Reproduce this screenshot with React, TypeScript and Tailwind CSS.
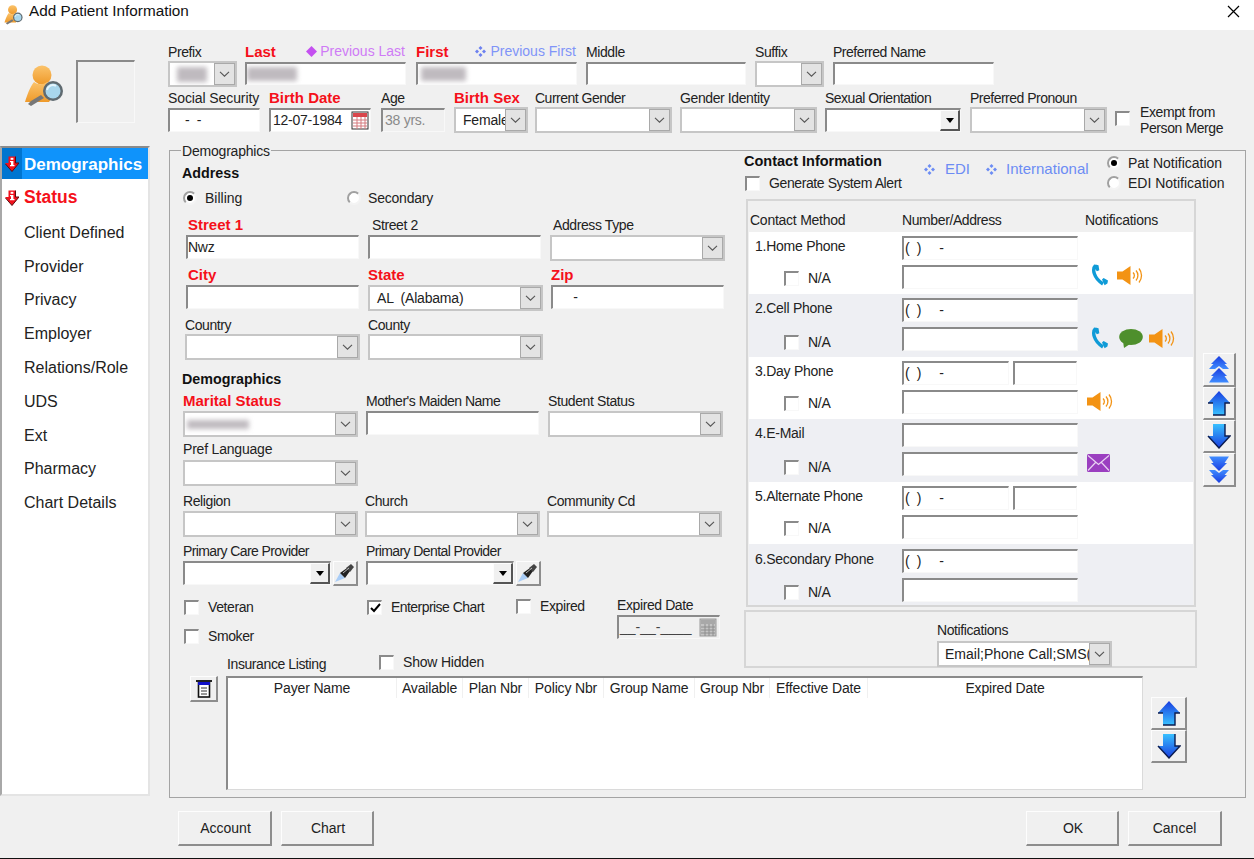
import type { ReactNode } from "react";

const sunken =
  "bg-white border-t-2 border-l-2 border-t-[#8a8a8a] border-l-[#8a8a8a] border-r border-b border-r-[#f8f8f8] border-b-[#f8f8f8]";
const raised =
  "bg-[#f0f0f0] border-t border-l border-t-[#fdfdfd] border-l-[#fdfdfd] border-r-2 border-b-2 border-r-[#8d8d8d] border-b-[#8d8d8d]";

function Label({ children, req, className = "" }: { children: ReactNode; req?: boolean; className?: string }) {
  return (
    <div
      className={`h-[17px] whitespace-nowrap ${
        req ? "leading-[15px] text-[15px] font-bold text-[#f5101a]" : "leading-[17px] text-[14px] tracking-[-0.4px] text-[#222]"
      } ${className}`}
    >
      {children}
    </div>
  );
}

function Input({ children, className = "" }: { children?: ReactNode; className?: string }) {
  return (
    <div className={`h-[24px] flex items-center overflow-hidden pl-[2px] text-[14px] tracking-[-0.25px] text-[#222] whitespace-pre ${sunken} ${className}`}>
      {children}
    </div>
  );
}

function Combo({ children, className = "" }: { children?: ReactNode; className?: string }) {
  return (
    <div className={`h-[26px] flex bg-white border-2 border-[#c6c6c6] text-[14px] tracking-[-0.2px] text-[#222] ${className}`}>
      <div className="flex-1 min-w-0 overflow-hidden whitespace-pre flex items-center pl-[7px]">{children}</div>
      <div className="w-[21px] shrink-0 bg-[#e3e3e3] border border-[#a9a9a9] flex items-center justify-center">
        <svg width="11" height="6" viewBox="0 0 11 6" fill="none" stroke="#555" strokeWidth="1.1">
          <path d="M1 0.8l4.5 4.4L10 0.8" />
        </svg>
      </div>
    </div>
  );
}

function DarkCombo({ className = "" }: { className?: string }) {
  return (
    <div className={`h-[24px] flex ${sunken} ${className}`}>
      <div className="flex-1" />
      <div className={`w-[20px] shrink-0 flex items-center justify-center ${raised} !border-r-[#555] !border-b-[#555]`}>
        <svg width="8" height="5" viewBox="0 0 8 5">
          <path d="M0 0h8L4 5z" fill="#000" />
        </svg>
      </div>
    </div>
  );
}

function Check({ checked, className = "" }: { checked?: boolean; className?: string }) {
  return (
    <div className={`w-[15px] h-[15px] shrink-0 ${sunken} flex items-center justify-center ${className}`}>
      {checked && (
        <svg width="11" height="10" viewBox="0 0 11 10" fill="none" stroke="#000" strokeWidth="2">
          <path d="M1 5l3 3 6-7" />
        </svg>
      )}
    </div>
  );
}

function Radio({ checked, className = "" }: { checked?: boolean; className?: string }) {
  return (
    <div
      className={`w-[14px] h-[14px] shrink-0 rounded-full bg-white border-2 border-t-[#a0a0a0] border-l-[#a0a0a0] border-r-[#f4f4f4] border-b-[#f4f4f4] flex items-center justify-center ${className}`}
    >
      {checked && <div className="w-[6px] h-[6px] rounded-full bg-black" />}
    </div>
  );
}

function Blur({ className }: { className: string }) {
  return <div className={`bg-[#bfbabf] blur-[2.5px] ${className}`} />;
}

function CheckLabel({ label, checked, className = "" }: { label: string; checked?: boolean; className?: string }) {
  return (
    <div className={`flex items-center h-[18px] text-[14px] tracking-[-0.4px] text-[#222] whitespace-nowrap ${className}`}>
      <Check checked={checked} />
      <span className="ml-[9px]">{label}</span>
    </div>
  );
}

function Sparkle({ color }: { color: string }) {
  return (
    <svg width="11" height="11" viewBox="0 0 11 11" fill={color} className="shrink-0">
      <path d="M5.5 0l2 2-2 2-2-2zM5.5 7l2 2-2 2-2-2zM2 3.5l2 2-2 2-2-2zM9 3.5l2 2-2 2-2-2z" />
    </svg>
  );
}

function PatientIcon({ size }: { size: number }) {
  return (
    <svg width={size} height={size} viewBox="0 0 42 42">
      <defs>
        <linearGradient id={`body${size}`} x1="0" y1="0" x2="0" y2="1">
          <stop offset="0" stopColor="#fbc36b" />
          <stop offset="1" stopColor="#ef9a2a" />
        </linearGradient>
      </defs>
      <circle cx="18" cy="10" r="9.5" fill={`url(#body${size})`} />
      <path d="M10 17c-4 5-7 13-9 20h24l6-9c-2-5-5-9-8-11-4 3-9 3-13 0z" fill={`url(#body${size})`} />
      <path d="M7 36l-3 3 3 2 13-8-3-3z" fill="#777" />
      <circle cx="29" cy="26" r="10" fill="#5f6a70" />
      <circle cx="29" cy="26" r="7.5" fill="#a8d6ec" />
      <path d="M23 25a6 6 0 0 1 9-4" stroke="#e4f4fb" strokeWidth="2" fill="none" />
    </svg>
  );
}

function AlertArrow() {
  return (
    <svg width="14" height="16" viewBox="0 0 14 16" className="shrink-0">
      <path d="M3.5 0.5h7v6.5H14L7 15.5 0 7h3.5z" fill="#f0101c" />
      <path d="M10.5 0.5V7H14L7 15.5" fill="none" stroke="#5a0a0c" strokeWidth="1" />
      <path d="M0.5 8L7 15.5" stroke="#5a0a0c" strokeWidth="1" />
      <rect x="5.6" y="1.8" width="2.8" height="2" fill="#fff" />
      <path d="M5 5h3.4v4H9.5v1.3H5V9h1V6.3H5z" fill="#fff" />
    </svg>
  );
}

function Phone() {
  return (
    <svg width="17" height="22" viewBox="0 0 17 22">
      <path d="M3.5 1.5C0 5 1.5 14 11 20" fill="none" stroke="#0f9bd7" strokeWidth="3.4" />
      <path d="M1.5 3l2-2.4 3 .6.8 5-2.4 1zM10 15.5l1.6-1.4 4.4 2.5-.6 3-2.8 1.6z" fill="#0f9bd7" />
    </svg>
  );
}

function Speaker({ className = "" }: { className?: string }) {
  return (
    <svg width="26" height="19" viewBox="0 0 26 19" className={className}>
      <path d="M0 5.5h5.5L13.5 0v19l-8-5.5H0z" fill="#f39314" />
      <g fill="none" stroke="#f39314" strokeWidth="1.3">
        <path d="M16 6.5a4 4 0 0 1 0 6" />
        <path d="M19 4.5a7.5 7.5 0 0 1 0 10" />
        <path d="M22 2.5a11 11 0 0 1 0 14" />
      </g>
    </svg>
  );
}

function Chat() {
  return (
    <svg width="24" height="19" viewBox="0 0 24 19">
      <ellipse cx="12" cy="8" rx="11.8" ry="8" fill="#4e8f2c" />
      <path d="M4 12l1 7 6-4z" fill="#4e8f2c" />
    </svg>
  );
}

function Mail() {
  return (
    <svg width="23" height="18" viewBox="0 0 23 18" className="mb-[2px]">
      <rect width="23" height="18" rx="1.5" fill="#9b3fc0" />
      <path d="M1 1.5l10.5 9 10.5-9M1 16.5l7.5-8M22 16.5l-7.5-8" fill="none" stroke="#e9d3f2" strokeWidth="1.2" />
    </svg>
  );
}

function Arrow({ id, down }: { id: string; down?: boolean }) {
  return (
    <svg width="24" height="26" viewBox="0 0 24 26">
      <defs>
        <linearGradient id={id} x1="0" y1="0" x2="0" y2="1">
          <stop offset="0" stopColor={down ? "#38c0ff" : "#1a3de0"} />
          <stop offset="1" stopColor={down ? "#1a3de0" : "#38c0ff"} />
        </linearGradient>
      </defs>
      {down ? (
        <>
          <path d="M6 1h12v12h5L12 25 1 13h5z" fill={`url(#${id})`} />
          <path d="M18 1v12h5L12 25 1 13" fill="none" stroke="#0b1c50" strokeWidth="1.4" />
        </>
      ) : (
        <>
          <path d="M12 1L23 13h-5v12H6V13H1z" fill={`url(#${id})`} />
          <path d="M23 13h-5v12H6M1 13h5" fill="none" stroke="#0b1c50" strokeWidth="1.4" />
        </>
      )}
    </svg>
  );
}

function DoubleArrow({ id, down }: { id: string; down?: boolean }) {
  return (
    <svg width="20" height="27" viewBox="0 0 20 27" className={down ? "rotate-180" : ""}>
      <defs>
        <linearGradient id={id} x1="0" y1="0" x2="0" y2="1">
          <stop offset="0" stopColor="#1a3de0" />
          <stop offset="1" stopColor="#3f8cff" />
        </linearGradient>
      </defs>
      <path d="M10 0l8 8-2.500 0L20 13H14L10 10 6 13H0L4.500 8H2z" fill={`url(#${id})`} />
      <path d="M10 12l8 8-2.500 0L20 26.500H0L4.500 20H2z" fill={`url(#${id})`} />
    </svg>
  );
}

function Calendar({ muted }: { muted?: boolean }) {
  return (
    <svg width="18" height="19" viewBox="0 0 18 19" className="shrink-0">
      <rect x="1" y="1" width="16" height="17" fill={muted ? "#c4c4c4" : "#fff"} stroke={muted ? "#9a9a9a" : "#333"} />
      <rect x="2" y="2" width="14" height="4" fill={muted ? "#a8a8a8" : "#d9464c"} />
      <path
        d="M2 9h14M2 12h14M2 15h14M6 6v12M10 6v12M14 6v12"
        stroke={muted ? "#8e8e8e" : "#d47a7e"}
        strokeWidth="1"
      />
    </svg>
  );
}

function Flashlight() {
  return (
    <button className={`w-[25px] h-[25px] shrink-0 flex items-center justify-center ${raised}`}>
      <svg width="20" height="20" viewBox="0 0 20 20">
        <path d="M0 19l5-9 5 5z" fill="#a9cdf7" />
        <path d="M5 10l7-5 3 3-5 7z" fill="#222" />
        <path d="M11 5l5-4 3 3-4 5z" fill="#444" />
        <path d="M8 10l6-5" stroke="#bbb" strokeWidth="1" />
      </svg>
    </button>
  );
}

const columns = [
  ["Payer Name", "w-[169px]"],
  ["Available", "w-[66px]"],
  ["Plan Nbr", "w-[66px]"],
  ["Policy Nbr", "w-[75px]"],
  ["Group Name", "w-[91px]"],
  ["Group Nbr", "w-[75px]"],
  ["Effective Date", "w-[98px]"],
  ["Expired Date", "flex-1"],
];

const contacts = [
  { label: "1.Home Phone", phone: true, icons: "home", bg: "bg-white", h: "h-[62px] pt-[4px]", na: "mt-[11px]" },
  { label: "2.Cell Phone", phone: true, icons: "cell", bg: "bg-[#eeeff3]", h: "h-[63px] pt-[4px]", na: "mt-[13px]" },
  { label: "3.Day Phone", phone: true, ext: true, icons: "day", bg: "bg-white", h: "h-[62px] pt-[4px]", na: "mt-[11px]" },
  { label: "4.E-Mail", icons: "mail", bg: "bg-[#eeeff3]", h: "h-[63px] pt-[4px]", na: "mt-[13px]" },
  { label: "5.Alternate Phone", phone: true, ext: true, bg: "bg-white", h: "h-[62px] pt-[4px]", na: "mt-[11px]" },
  { label: "6.Secondary Phone", phone: true, bg: "bg-[#eeeff3]", h: "h-[61px] pt-[5px]", na: "mt-[12px]" },
];

const navItems = ["Client Defined", "Provider", "Privacy", "Employer", "Relations/Role", "UDS", "Ext", "Pharmacy", "Chart Details"];

function ContactRow({ row }: { row: (typeof contacts)[number] }) {
  return (
    <div className={`${row.h} ${row.bg} flex`}>
      <div className="w-[153px]">
        <div className="pl-[6px] h-[21px] leading-[21px] text-[14px] tracking-[-0.25px] text-[#222] whitespace-nowrap">{row.label}</div>
        <div className={`flex items-center pl-[35px] text-[14px] tracking-[-0.25px] text-[#222] ${row.na}`}>
          <Check />
          <span className="ml-[9px]">N/A</span>
        </div>
      </div>
      <div className="w-[176px]">
        {row.ext ? (
          <div className="flex">
            <Input className="w-[107px] !pl-[1px]">{"(  )     -"}</Input>
            <Input className="w-[64px] ml-[4px]" />
          </div>
        ) : (
          <Input className="!pl-[1px]">{row.phone ? "(  )     -" : ""}</Input>
        )}
        <Input className="mt-[5px]" />
      </div>
      <div className="flex-1 flex items-end pb-[8px]">
        {row.icons === "home" && (
          <div className="ml-[14px] flex gap-[8px] items-center">
            <Phone />
            <Speaker />
          </div>
        )}
        {row.icons === "cell" && (
          <div className="ml-[14px] flex gap-[10px] items-center">
            <Phone />
            <Chat />
            <Speaker className="-ml-[4px]" />
          </div>
        )}
        {row.icons === "day" && <Speaker className="ml-[9px]" />}
        {row.icons === "mail" && <div className="ml-[9px]"><Mail /></div>}
      </div>
    </div>
  );
}

function Demographics() {
  return (
    <div className="w-[574px] shrink-0">
      <div className="ml-[12px] mt-[13px] h-[18px] leading-[18px] text-[14.3px] font-bold text-[#111]">Address</div>
      <div className="mt-[7px] flex items-center h-[18px] text-[14px] text-[#222]">
        <div className="ml-[13px] w-[164px] flex items-center">
          <Radio checked />
          <span className="ml-[8px]">Billing</span>
        </div>
        <Radio />
        <span className="ml-[7px] tracking-[-0.2px]">Secondary</span>
      </div>

      <div className="mt-[10px] flex h-[50px]">
        <div className="ml-[16px] w-[173px]">
          <Label req className="pl-[2px]">Street 1</Label>
          <Input className="mt-[1px] !pl-0">Nwz</Input>
        </div>
        <div className="ml-[9px] w-[173px]">
          <Label className="pl-[4px]">Street 2</Label>
          <Input className="mt-[1px]" />
        </div>
        <div className="ml-[9px] w-[175px]">
          <Label className="pl-[3px]">Address Type</Label>
          <Combo className="mt-[1px]" />
        </div>
      </div>
      <div className="flex h-[50px]">
        <div className="ml-[16px] w-[173px]">
          <Label req className="pl-[2px]">City</Label>
          <Input className="mt-[1px]" />
        </div>
        <div className="ml-[9px] w-[175px]">
          <Label req>State</Label>
          <Combo className="mt-[1px]">AL  (Alabama)</Combo>
        </div>
        <div className="ml-[8px] w-[173px]">
          <Label req>Zip</Label>
          <Input className="mt-[1px]">{"     -"}</Input>
        </div>
      </div>
      <div className="flex h-[50px]">
        <div className="ml-[15px] w-[175px]">
          <Label>Country</Label>
          <Combo />
        </div>
        <div className="ml-[8px] w-[175px]">
          <Label>County</Label>
          <Combo />
        </div>
      </div>

      <div className="ml-[12px] mt-[3px] h-[18px] leading-[18px] text-[14.3px] font-bold text-[#111]">Demographics</div>
      <div className="mt-[5px] flex">
        <div className="ml-[13px] w-[175px]">
          <Label req>Marital Status</Label>
          <Combo className="mt-[1px]">
            <Blur className="w-[62px] h-[9px] -ml-[5px]" />
          </Combo>
        </div>
        <div className="ml-[8px] w-[173px]">
          <Label className="!tracking-[-0.5px]">Mother's Maiden Name</Label>
          <Input className="mt-[1px]" />
        </div>
        <div className="ml-[9px] w-[175px]">
          <Label>Student Status</Label>
          <Combo className="mt-[1px]" />
        </div>
      </div>
      <div className="mt-[4px] ml-[13px] w-[175px]">
        <Label className="!tracking-[-0.2px]">Pref Language</Label>
        <Combo className="mt-[2px]" />
      </div>
      <div className="mt-[7px] flex">
        <div className="ml-[13px] w-[175px]">
          <Label>Religion</Label>
          <Combo className="mt-[1px]" />
        </div>
        <div className="ml-[7px] w-[175px]">
          <Label>Church</Label>
          <Combo className="mt-[1px]" />
        </div>
        <div className="ml-[7px] w-[175px]">
          <Label>Community Cd</Label>
          <Combo className="mt-[1px]" />
        </div>
      </div>
      <div className="mt-[6px] flex">
        <div className="ml-[13px]">
          <Label className="!tracking-[-0.6px]">Primary Care Provider</Label>
          <div className="flex mt-[1px]">
            <DarkCombo className="w-[148px]" />
            <div className="ml-[2px]">
              <Flashlight />
            </div>
          </div>
        </div>
        <div className="ml-[8px]">
          <Label className="!tracking-[-0.6px]">Primary Dental Provider</Label>
          <div className="flex mt-[1px]">
            <DarkCombo className="w-[148px]" />
            <div className="ml-[2px]">
              <Flashlight />
            </div>
          </div>
        </div>
      </div>
      <div className="mt-[12px] flex h-[38px]">
        <div className="ml-[14px] w-[183px]">
          <CheckLabel label="Veteran" />
          <CheckLabel label="Smoker" className="mt-[11px]" />
        </div>
        <CheckLabel label="Enterprise Chart" checked className="w-[149px] !tracking-[-0.55px]" />
        <CheckLabel label="Expired" className="-mt-[1px] w-[101px]" />
        <div className="-mt-[1px]">
          <Label>Expired Date</Label>
          <div className={`mt-[1px] w-[103px] h-[24px] flex items-center justify-between pl-[1px] pr-[2px] text-[14px] text-[#444] ${sunken} !bg-[#f0f0f0]`}>
            <span>__-__-____</span>
            <Calendar muted />
          </div>
        </div>
      </div>
      <div className="mt-[19px] flex h-[18px] text-[14px] tracking-[-0.4px] text-[#222]">
        <span className="ml-[57px] w-[100px] leading-[18px] whitespace-nowrap">Insurance Listing</span>
        <CheckLabel label="Show Hidden" className="ml-[52px] -mt-[2px] !tracking-[-0.2px]" />
      </div>
    </div>
  );
}

function Contact() {
  return (
    <div className="flex-1 min-w-0">
      <div className="flex h-[48px]">
        <div className="w-[180px] pt-[1px]">
          <div className="h-[18px] leading-[18px] text-[14.5px] font-bold text-[#111] whitespace-nowrap">Contact Information</div>
          <CheckLabel label="Generate System Alert" className="mt-[4px] ml-[1px]" />
        </div>
        <div className="w-[183px] flex items-start pt-[13px] text-[15px] leading-[17px] text-[#6c8cf4] whitespace-nowrap">
          <Sparkle color="#6c8cf4" />
          <span className="ml-[10px] -mt-[4px]">EDI</span>
          <div className="ml-[16px]">
            <Sparkle color="#6c8cf4" />
          </div>
          <span className="ml-[9px] -mt-[4px]">International</span>
        </div>
        <div className="pt-[3px] text-[14px] text-[#222] whitespace-nowrap">
          <div className="flex items-center h-[18px]">
            <Radio checked />
            <span className="ml-[7px]">Pat Notification</span>
          </div>
          <div className="flex items-center h-[18px] mt-[2px]">
            <Radio />
            <span className="ml-[7px]">EDI Notification</span>
          </div>
        </div>
      </div>
      <div className="flex">
        <div className="w-[453px] shrink-0">
          <div className="ml-[2px] w-[450px] h-[408px] border-2 border-[#d6d6d6] px-[1px]">
            <div className="h-[31px] flex items-center text-[14px] tracking-[-0.25px] text-[#222] pt-[8px]">
              <span className="w-[153px] pl-[1px]">Contact Method</span>
              <span className="w-[183px] tracking-[-0.4px]">Number/Address</span>
              <span>Notifications</span>
            </div>
            {contacts.map((row) => (
              <ContactRow key={row.label} row={row} />
            ))}
          </div>
          <div className="mt-[3px] w-[453px] h-[58px] border-2 border-[#d6d6d6] pl-[191px] pt-[10px]">
            <Label>Notifications</Label>
            <Combo className="w-[175px] mt-[2px] !tracking-normal">
              <span className="-ml-[1px]">Email;Phone Call;SMS(</span>
            </Combo>
          </div>
        </div>
        <div className="ml-[6px] mt-[154px] flex flex-col">
          <button className={`w-[33px] h-[34px] flex items-center justify-center ${raised}`}>
            <DoubleArrow id="dup" />
          </button>
          <button className={`w-[33px] h-[33px] flex items-center justify-center ${raised}`}>
            <Arrow id="up1" />
          </button>
          <button className={`w-[33px] h-[33px] flex items-center justify-center ${raised}`}>
            <Arrow id="down1" down />
          </button>
          <button className={`w-[33px] h-[34px] flex items-center justify-center ${raised}`}>
            <DoubleArrow id="ddown" down />
          </button>
        </div>
      </div>
    </div>
  );
}

export default function App() {
  return (
    <div className="w-[1254px] h-[859px] overflow-hidden flex flex-col bg-[#f0f0f0] border-b border-b-[#111] font-['Liberation_Sans',Arial,sans-serif]">
      <div className="h-[30px] shrink-0 bg-white flex items-center">
        <div className="ml-[4px]">
          <PatientIcon size={20} />
        </div>
        <span className="ml-[5px] text-[15.3px] text-[#111] -mt-[8px]">Add Patient Information</span>
        <svg width="13" height="13" viewBox="0 0 13 13" className="ml-auto mr-[14px] -mt-[8px]" stroke="#000" strokeWidth="1.2">
          <path d="M1 1l11 11M12 1L1 12" />
        </svg>
      </div>

      <div className="h-[116px] shrink-0 flex">
        <div className="w-[168px] shrink-0 flex pl-[24px] pt-[30px]">
          <div className="mt-[5px]">
            <PatientIcon size={42} />
          </div>
          <div className={`ml-[10px] w-[59px] h-[63px] ${sunken} !bg-[#f0f0f0]`} />
        </div>
        <div className="pt-[14px]">
          <div className="flex h-[46px]">
            <div className="w-[69px]">
              <Label>Prefix</Label>
              <Combo>
                <Blur className="w-[30px] h-[15px]" />
              </Combo>
            </div>
            <div className="ml-[8px] w-[161px]">
              <div className="flex justify-between items-start h-[17px]">
                <Label req>Last</Label>
                <span className="flex items-center text-[14px] leading-[15px] text-[#cf7bf6] pr-[1px]">
                  <svg width="11" height="11" viewBox="0 0 11 11" fill="#c450f0" className="mr-[3px]">
                    <path d="M5.500 0l5.500 5.500-5.500 5.500L0 5.500z" />
                  </svg>
                  Previous Last
                </span>
              </div>
              <Input className="mt-[1px] !h-[23px]">
                <Blur className="w-[50px] h-[14px] -ml-[2px]" />
              </Input>
            </div>
            <div className="ml-[10px] w-[161px]">
              <div className="flex justify-between items-start h-[17px]">
                <Label req>First</Label>
                <span className="flex items-center text-[14px] leading-[15px] text-[#8094f8] pr-[1px]">
                  <span className="mr-[4px]">
                    <Sparkle color="#6c80f0" />
                  </span>
                  Previous First
                </span>
              </div>
              <Input className="mt-[1px] !h-[23px]">
                <Blur className="w-[45px] h-[14px] ml-[1px]" />
              </Input>
            </div>
            <div className="ml-[9px] w-[160px]">
              <Label>Middle</Label>
              <Input className="mt-[1px] !h-[23px]" />
            </div>
            <div className="ml-[9px] w-[69px]">
              <Label>Suffix</Label>
              <Combo />
            </div>
            <div className="ml-[9px] w-[161px]">
              <Label className="!tracking-[-0.5px]">Preferred Name</Label>
              <Input className="mt-[1px] !h-[23px]" />
            </div>
          </div>
          <div className="flex">
            <div className="w-[92px]">
              <Label className="!tracking-[-0.1px]">Social Security</Label>
              <Input className="mt-[1px] !pl-[15px]">{"-  -"}</Input>
            </div>
            <div className="ml-[9px] w-[102px]">
              <Label req>Birth Date</Label>
              <Input className="mt-[1px] justify-between pr-[1px]">
                <span>12-07-1984</span>
                <Calendar />
              </Input>
            </div>
            <div className="ml-[10px] w-[64px]">
              <Label>Age</Label>
              <Input className="mt-[1px] !bg-[#f0f0f0] !text-[#8a8a8a]">38 yrs.</Input>
            </div>
            <div className="ml-[9px] w-[74px]">
              <Label req>Birth Sex</Label>
              <Combo>Female</Combo>
            </div>
            <div className="ml-[7px] w-[137px]">
              <Label className="!tracking-[-0.5px]">Current Gender</Label>
              <Combo />
            </div>
            <div className="ml-[8px] w-[137px]">
              <Label>Gender Identity</Label>
              <Combo />
            </div>
            <div className="ml-[8px] w-[136px]">
              <Label className="!tracking-[-0.5px]">Sexual Orientation</Label>
              <DarkCombo className="mt-[1px]" />
            </div>
            <div className="ml-[9px] w-[137px]">
              <Label className="!tracking-[-0.5px]">Preferred Pronoun</Label>
              <Combo />
            </div>
            <Check className="ml-[8px] mt-[21px]" />
            <div className="ml-[10px] mt-[14px] text-[14px] tracking-[-0.4px] leading-[16px] text-[#222] whitespace-nowrap">
              Exempt from
              <br />
              Person Merge
            </div>
          </div>
        </div>
      </div>

      <div className="h-[652px] shrink-0 flex">
        <div className="w-[150px] shrink-0 h-[650px] bg-white border-2 border-[#a8a8a8] border-r-[#e4e4e4] border-b-[#e4e4e4] border-t-[#8a8a8a]">
          <div className="h-[31px] flex bg-[#0f93fb] text-white font-bold text-[17px]">
            <div className="w-[20px] bg-[#0075d0] flex items-center justify-center">
              <AlertArrow />
            </div>
            <span className="ml-[2px] leading-[33px]">Demographics</span>
          </div>
          <div className="h-[37px] flex items-center text-[#f5101a] font-bold text-[17.5px]">
            <div className="w-[20px] flex justify-center">
              <AlertArrow />
            </div>
            <span className="ml-[2px]">Status</span>
          </div>
          {navItems.map((item) => (
            <div key={item} className="h-[33.8px] flex items-center pl-[22px] text-[16px] text-[#222]">
              {item}
            </div>
          ))}
        </div>

        <div className="ml-[19px] w-[1077px] mt-[4px] h-[648px] border border-[#a4a4a4] relative flex flex-col">
          <span className="absolute -top-[7px] left-[11px] bg-[#f0f0f0] px-[1px] text-[14px] tracking-[-0.2px] leading-[15px] text-[#222]">Demographics</span>
          <div className="h-[525px] flex shrink-0">
            <Demographics />
            <Contact />
          </div>
          <div className="flex">
            <button className={`ml-[20px] w-[28px] h-[26px] flex items-center justify-center ${raised}`}>
              <svg width="18" height="18" viewBox="0 0 18 18">
                <rect x="3.500" y="2" width="11" height="15" fill="#fff" stroke="#111" strokeWidth="1.600" />
                <rect x="1" y="0" width="16" height="2" fill="#222" />
                <rect x="3" y="2" width="12" height="3" fill="#1212c8" />
                <path d="M6 8h6M6 11h6M6 14h6" stroke="#333" />
              </svg>
            </button>
            <div className={`ml-[8px] w-[917px] h-[114px] ${sunken} !border-b-[#dadada] !border-r-[#dadada]`}>
              <div className="flex h-[20px] text-[14px] tracking-[-0.15px] text-[#222] whitespace-nowrap">
                {columns.map(([title, width]) => (
                  <div key={title} className={`${width} text-center leading-[20px] border-r border-r-[#f0f0f0] last:border-r-0`}>
                    {title}
                  </div>
                ))}
              </div>
            </div>
            <div className="ml-[8px] mt-[21px] flex flex-col">
              <button className={`w-[36px] h-[33px] flex items-center justify-center ${raised}`}>
                <Arrow id="up2" />
              </button>
              <button className={`w-[36px] h-[33px] flex items-center justify-center ${raised}`}>
                <Arrow id="down2" down />
              </button>
            </div>
          </div>
        </div>
      </div>

      <div className="flex-1 flex pt-[13px] text-[14px] text-[#222]">
        <button className={`ml-[178px] w-[94px] h-[35px] pl-[2px] ${raised}`}>Account</button>
        <button className={`ml-[9px] w-[93px] h-[35px] pl-[2px] ${raised}`}>Chart</button>
        <button className={`ml-[652px] w-[93px] h-[35px] pl-[2px] ${raised}`}>OK</button>
        <button className={`ml-[9px] w-[94px] h-[35px] ${raised}`}>Cancel</button>
      </div>
    </div>
  );
}
